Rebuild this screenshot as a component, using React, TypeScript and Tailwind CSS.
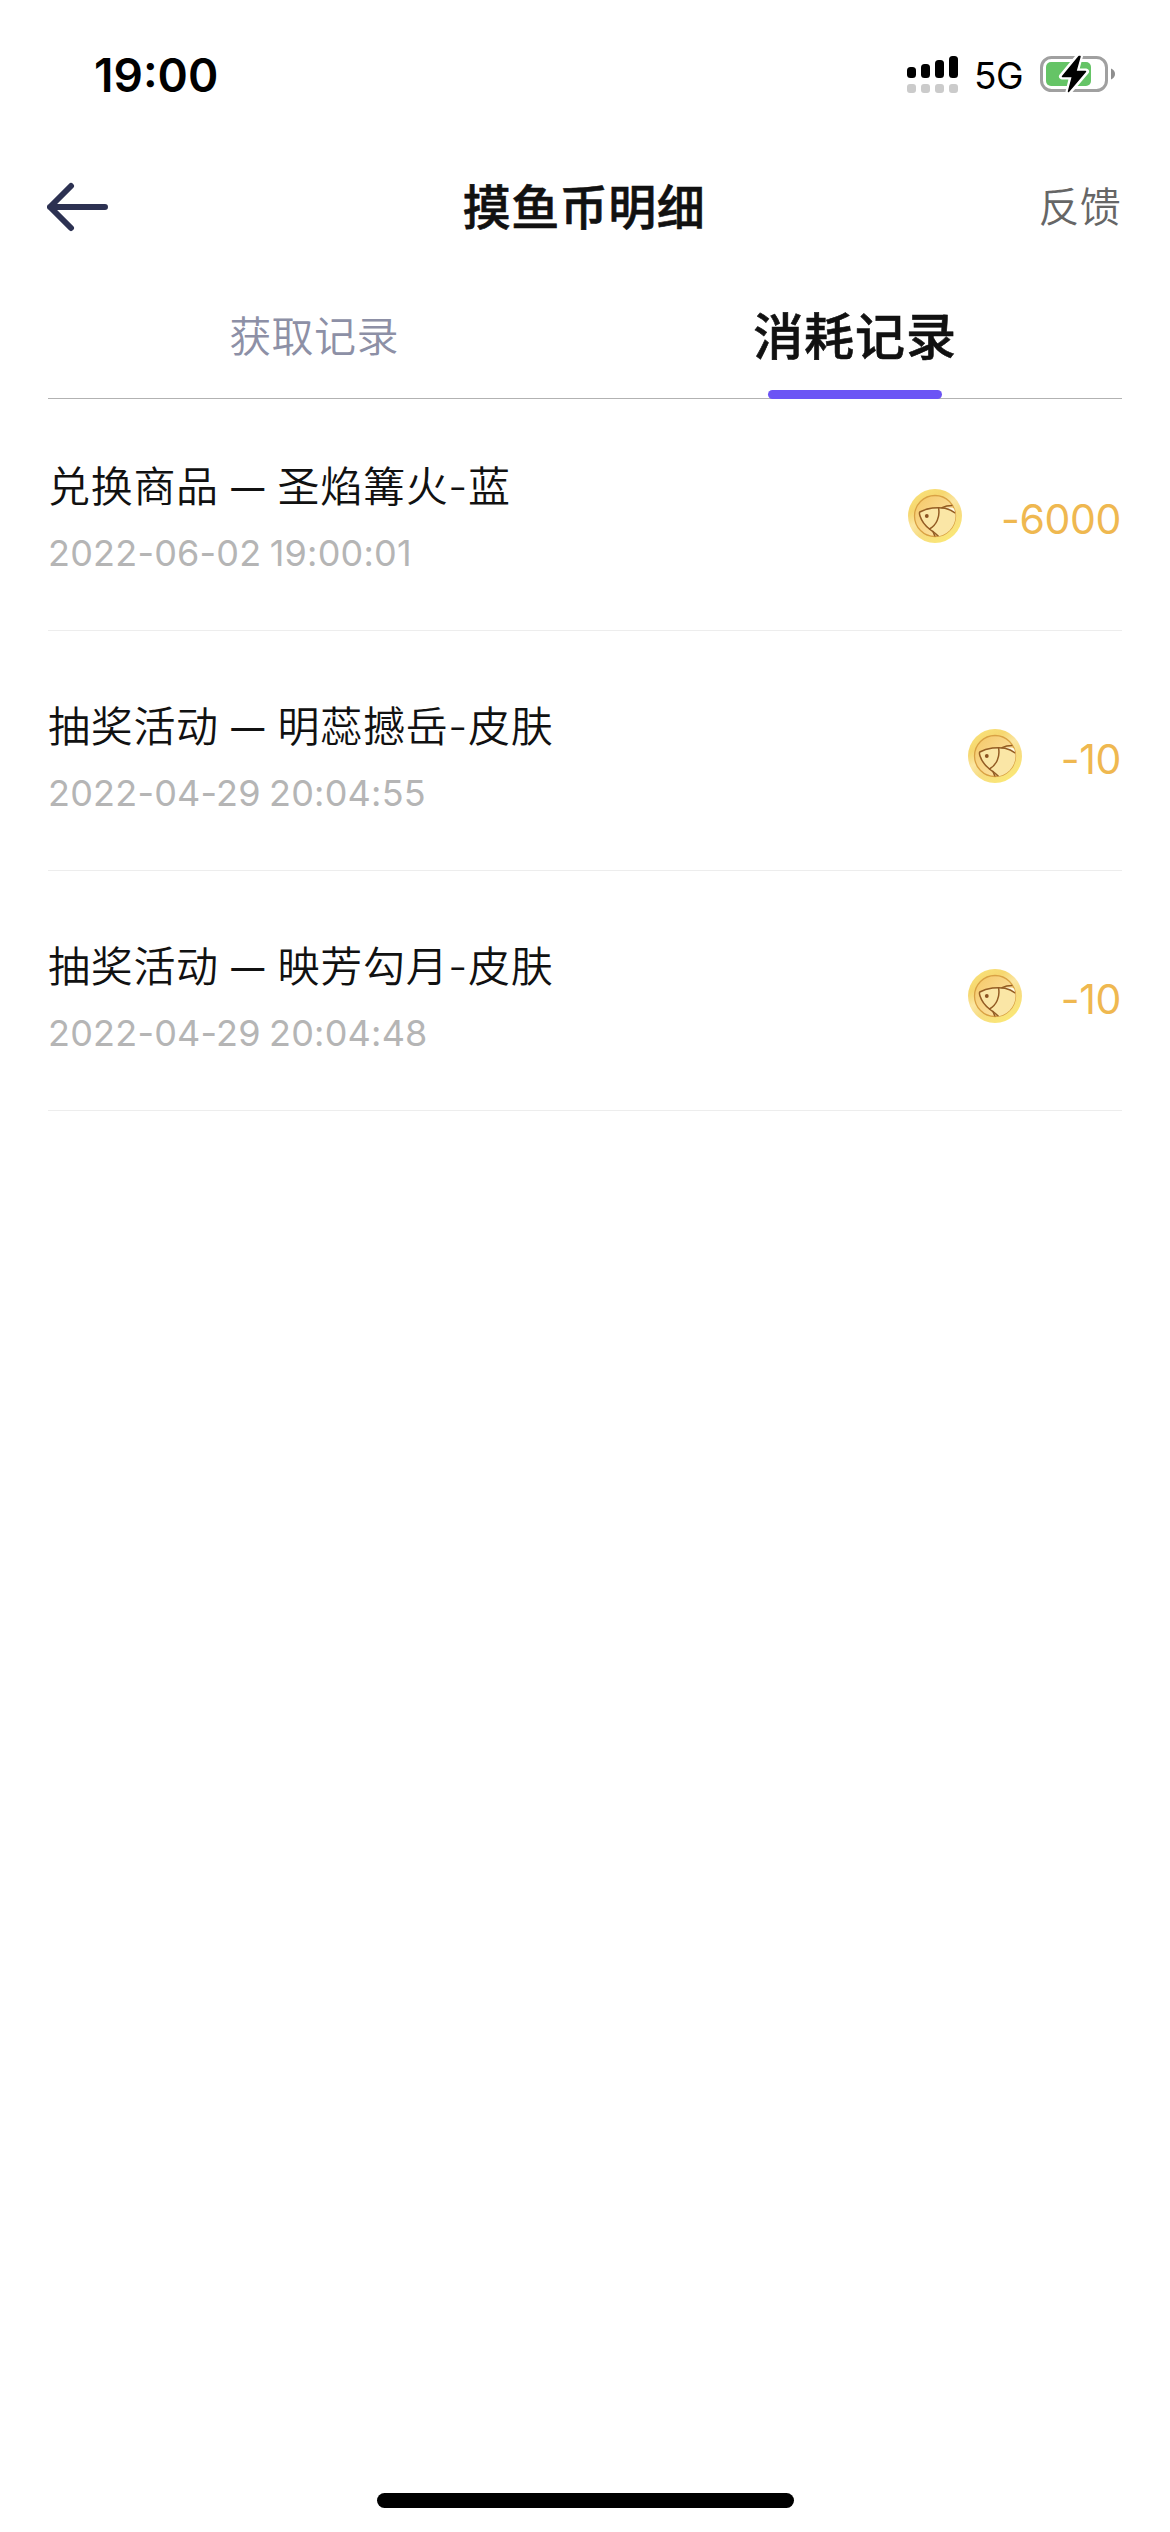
type CoinRecord = {
  id: number
  type: string
  item: string
  time: string
  amount: number
}

const records: CoinRecord[] = [
  { id: 1, type: '兑换商品', item: '圣焰篝火-蓝', time: '2022-06-02 19:00:01', amount: -6000 },
  { id: 2, type: '抽奖活动', item: '明蕊撼岳-皮肤', time: '2022-04-29 20:04:55', amount: -10 },
  { id: 3, type: '抽奖活动', item: '映芳勾月-皮肤', time: '2022-04-29 20:04:48', amount: -10 },
]

const SignalIcon = () => (
  <svg width="51" height="37" viewBox="0 0 51 37">
    <rect x="0" y="11" width="9" height="11" rx="3.5" />
    <rect x="14" y="8" width="9" height="14" rx="3.5" />
    <rect x="28" y="4" width="9" height="18" rx="3.5" />
    <rect x="42" y="0" width="9" height="22" rx="3.5" />
    <g fill="#cbcbcb">
      <rect x="0" y="28" width="9" height="9" rx="3" />
      <rect x="14" y="28" width="9" height="9" rx="3" />
      <rect x="28" y="28" width="9" height="9" rx="3" />
      <rect x="42" y="28" width="9" height="9" rx="3" />
    </g>
  </svg>
)

const BatteryIcon = () => (
  <svg width="75" height="40" viewBox="0 0 75 40">
    <rect x="1.5" y="3.5" width="65" height="33" rx="10" fill="none" stroke="#a0a0a0" strokeWidth="3" />
    <rect x="6" y="8" width="45" height="24" rx="5" fill="#65c466" />
    <path d="M71 14.5c2.600 .9 4 3 4 5.500s-1.400 4.600-4 5.500z" fill="#8e8e8e" />
    <path
      d="M39 2 22 22.500h10.200L28.500 38 46 17.500H35.800L40 2z"
      stroke="#fff"
      strokeWidth="6"
      strokeLinejoin="round"
    />
    <path
      d="M39 2.500 22.500 22.500h10L28.500 37.500 45.500 17.500H35.800L40 2.500z"
      stroke="#000"
      strokeWidth="1.500"
      strokeLinejoin="round"
    />
  </svg>
)

const BackArrow = () => (
  <svg width="62" height="50" viewBox="0 0 62 50" fill="none" stroke="#2c3152" strokeWidth="6" strokeLinecap="round" strokeLinejoin="round">
    <path d="M24 4 3 25l21 21M3 25h55" />
  </svg>
)

const FishCoin = () => (
  <svg width="54" height="54" viewBox="0 0 54 54" fill="none">
    <defs>
      <linearGradient id="coin-rim" x1="0.2" y1="0" x2="0.8" y2="1">
        <stop offset="0" stopColor="#f9e27a" />
        <stop offset="0.25" stopColor="#f6d76f" />
        <stop offset="0.45" stopColor="#fbe6a2" />
        <stop offset="0.65" stopColor="#f7dc80" />
        <stop offset="1" stopColor="#fbea74" />
      </linearGradient>
      <linearGradient id="coin-face" x1="0" y1="0" x2="0.8" y2="0.8">
        <stop offset="0" stopColor="#f4c766" />
        <stop offset="1" stopColor="#fde2a2" />
      </linearGradient>
      <clipPath id="coin-clip">
        <circle cx="27" cy="27" r="20.500" />
      </clipPath>
    </defs>
    <circle cx="27" cy="27" r="27" fill="url(#coin-rim)" />
    <circle cx="27" cy="27" r="20.500" fill="url(#coin-face)" stroke="#d9a144" strokeWidth="1.300" />
    <g clipPath="url(#coin-clip)" stroke="#935c24" strokeWidth="1.500" strokeLinecap="round">
      <path
        d="M11.800 23C19 19 30 17.800 38 19.500c4 1 7 2.500 10 5V48H30c-1-3-5-5-8.500-8C16 35 13 30 11.800 23z"
        fill="#fae6a6"
        stroke="none"
      />
      <path d="M36 19.300c4 .3 8 2 11.500 4.500V20c-3-1.300-7-1.500-11.500-.7z" fill="#fffbe8" stroke="none" />
      <path d="M11.800 23C19 19 30 17.800 37 19.300c4 .9 7 2.300 10 4.500M11.800 23c-.8 1-.3 2.500.2 4 1.600 5 5 9.500 9.500 13 3.500 2.700 7 4.700 9 7.500" />
      <path d="M30.500 18.700c1.800 9-2 17.300-9 21.300M34 18.700c3-1.500 6-2.200 10-2.200M25 42.500l2 5" />
      <circle cx="18.800" cy="27" r="1.900" fill="#8a5220" stroke="none" />
    </g>
  </svg>
)

const StatusBar = () => (
  <div className="flex h-[150px] items-start justify-between pl-[94px] pr-[55px] text-black">
    <span className="mt-[47px] text-[46px] font-semibold leading-[56px]">19:00</span>
    <div className="mt-[54px] flex items-start">
      <div className="mt-0.5">
        <SignalIcon />
      </div>
      <span className="ml-[16px] w-[66px] text-[37px] leading-[44px] tracking-[-0.5px]">5G</span>
      <BatteryIcon />
    </div>
  </div>
)

const Header = () => (
  <header className="grid h-[114px] grid-cols-3 items-center pl-[47px] pr-[49px]">
    <button className="justify-self-start" aria-label="返回">
      <BackArrow />
    </button>
    <h1 className="whitespace-nowrap pt-0.5 text-center text-[48px] font-medium tracking-[0.5px] text-[#111] [-webkit-text-stroke:0.6px]">
      摸鱼币明细
    </h1>
    <button className="justify-self-end pt-0.5 text-[41px] font-[350] tracking-[0.3px] text-[#666]">反馈</button>
  </header>
)

const Tabs = () => (
  <nav className="mx-12 grid h-[135px] grid-cols-[532px_534px] justify-between border-b border-[#b2b2b2]">
    <button className="flex items-center justify-center pt-[11px] text-[42px] font-[350] tracking-[0.4px] text-[#8d90a6]">
      获取记录
    </button>
    <button className="relative flex items-center justify-center pt-[12px] text-[50px] font-medium tracking-[0.9px] text-[#111] [-webkit-text-stroke:0.6px]">
      消耗记录
      <span className="absolute -bottom-px left-1/2 h-[9px] w-[174px] -translate-x-1/2 rounded-full bg-[#6c54f5]" />
    </button>
  </nav>
)

const RecordRow = ({ record }: { record: CoinRecord }) => (
  <li className="flex h-60 items-center justify-between border-b border-[#ededed] pt-[11px]">
    <div className="pt-0.5">
      <p className="text-[42px] font-[350] leading-[60px] tracking-[0.7px] text-[#111]">
        {record.type} <span className="align-[2px] text-[33px] font-medium leading-none">—</span> {record.item}
      </p>
      <p className="mt-[11px] text-[36px] leading-[50px] tracking-[0.2px] text-[#b5b5b5] [word-spacing:-2px]">
        {record.time}
      </p>
    </div>
    <div className="mr-px flex items-center">
      <FishCoin />
      <span className="ml-[39px] pt-1.5 text-[41px] leading-[48px] tracking-[-0.4px] text-[#efb850]">{record.amount}</span>
    </div>
  </li>
)

export default function App() {
  return (
    <div className="flex h-[2532px] w-[1170px] flex-col bg-white font-['Inter','Noto_Sans_CJK_SC',sans-serif]">
      <StatusBar />
      <Header />
      <Tabs />
      <ul className="-mt-2 mx-12 flex-1">
        {records.map((record) => (
          <RecordRow key={record.id} record={record} />
        ))}
      </ul>
      <div className="mx-auto mb-6 h-[15px] w-[417px] rounded-full bg-black" />
    </div>
  )
}
